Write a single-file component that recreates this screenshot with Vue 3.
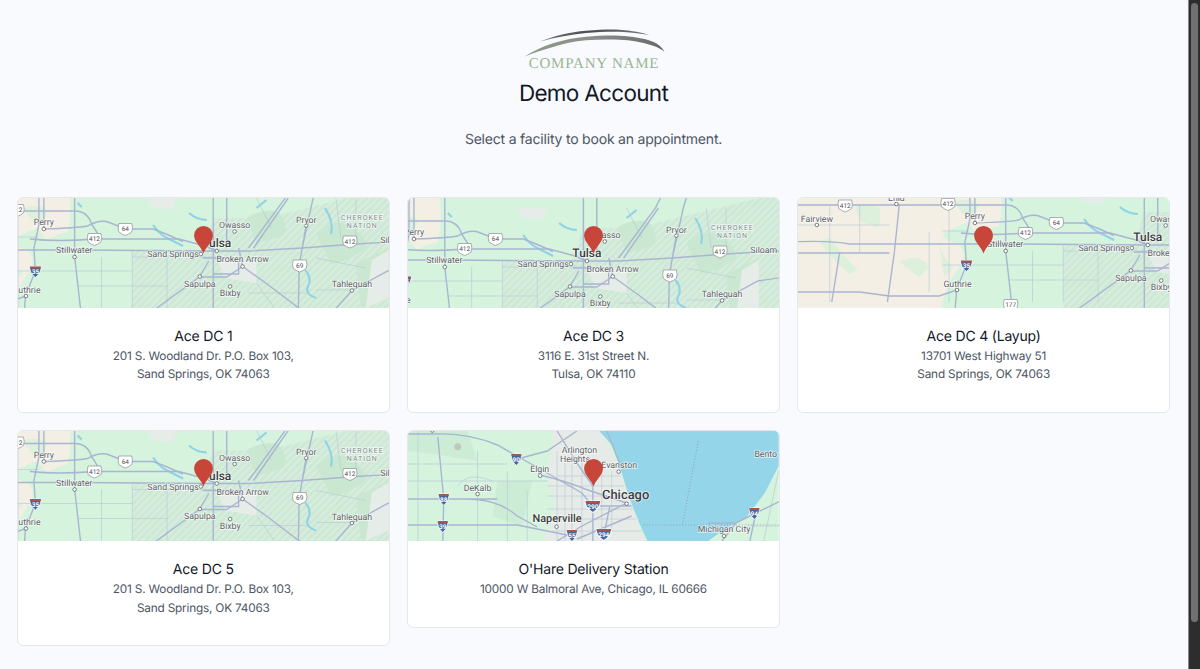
<script setup>
const tulsaLabels = [
  { x: -133, y: 30, t: 'Fairview' }, { x: -53, y: 9, t: 'Enid' },
  { x: 26, y: 27, t: 'Perry' }, { x: 56.5, y: 55, t: 'Stillwater' },
  { x: 218, y: 30, t: 'Owasso' }, { x: 290, y: 24.5, t: 'Pryor' },
  { x: 156, y: 59, t: 'Sand Springs' }, { x: 226, y: 64, t: 'Broken Arrow' },
  { x: 183, y: 88.5, t: 'Sapulpa' }, { x: 213.5, y: 98, t: 'Bixby' },
  { x: 336, y: 89, t: 'Tahlequah' }, { x: 8.5, y: 94.5, t: 'Guthrie' },
  { x: 378, y: 45, t: 'Siloam' }
]
const tulsaDots = [[-133, 33], [-53, 12], [26, 31], [57, 59], [218, 33.5], [290, 27.5], [184, 56], [200, 53], [226, 68.5], [183, 78.5], [213.5, 88.5], [336, 92.5], [8, 98]]
const tulsaShields = [
  { x: 108, y: 31, t: '64' }, { x: 77, y: 41, t: '412' }, { x: 334, y: 43.5, t: '412' },
  { x: 283.5, y: 67.5, t: '69' }, { x: -1, y: 12, t: '412' }, { x: -104.5, y: 13.5, t: '412' },
  { x: 62, y: 113, t: '177' }
]
const tulsaRoads = [
  'M-160 13 H57 Q70 13 74 26 L83 40',
  'M-160 61 H-60 M-160 50 Q-120 48 -100 52 H57 L200 53 H232 L286 50 L340 46 L410 42',
  'M12 41 Q40 44 77 41 H162 L188 48 L200 53',
  'M-160 100 H-90 L-60 104 H-10 L8 98 M-110 60 L-118 110 M-50 12 L-55 60 L-62 110',
  'M26 31 Q60 30 70 28 Q80 22 89 23.5 L109 31 H136 Q150 36 166 43.5',
  'M21 -10 V27 L16 50 L17.5 73 L7.5 98 L6 120 M26 -10 V31',
  'M57 -10 V59 L60 85 L64 120',
  'M196.5 -10 V120 M210 -10 V50 M222 50 L226 68',
  'M232 50 L269 0 L274 -10 M237 50 L272 0 M286 50 L297 0 L300 -10 M290 27 L286 50 L283 67 L282 120',
  'M192 63 L182.5 79 L126 120 M183 79 H210 L226 68.5 L252 87 L289 115',
  'M336 92.5 L316 115 M336 92.5 L372 73 L420 66',
  'M186 60 H222 V76 H196'
]
const tulsaThin = [
  'M-160 33 H-60 M-120 13 V110 M-90 13 V60 M-20 40 V100 M0 13 V110',
  'M-7 73 H60 H115 M-7 39 H20 M84 59 V110 M115 53 V110 M60 88 H150',
  'M115 59 H200 M150 59 V110 M240 0 L255 30 M300 60 L350 70 M320 0 L325 40',
  'M240 85 L258 110 M340 0 V45 M232 95 H290 M300 92 H336'
]
const tulsaWater = [
  'M136 27 Q142 36 150 40 T166 48', 'M172 15 Q180 22 190 22', 'M309 10 Q318 24 315 36',
  'M289 72 Q296 80 292 88 T300 100', 'M240 10 L250 2', 'M60 5 L64 9'
]

const chicagoLabels = [
  { x: 172.5, y: 22, t: 'Arlington' }, { x: 168, y: 31, t: 'Heights' }, { x: 212.5, y: 37, t: 'Evanston' },
  { x: 132.5, y: 40.5, t: 'Elgin' }, { x: 70, y: 60, t: 'DeKalb' }, { x: 318, y: 100.5, t: 'Michigan City' },
  { x: 360, y: 26, t: 'Bento' }
]
const chicagoDots = [[24.5, -0.5], [133, 44.7], [70, 63], [212, 40.7], [220, 72.7], [149.5, 95.7], [318, 105]]
const chicagoShields = [
  { x: 109, y: 28, t: '90' }, { x: 36, y: 68, t: '88' }, { x: 35, y: 95, t: '39' }, { x: 186, y: 75, t: '290', wide: true },
  { x: 165, y: 104, t: '55' }, { x: 197, y: 103, t: '294', wide: true }, { x: 348.5, y: 82, t: '94' }
]
const chicagoRoads = [
  'M0 3 H30 Q60 2 90 14 L140 42 L175 62 L186 75 L186 110 M30 6 L36 68 L35 110',
  'M0 68 H60 Q90 68 110 85 L130 96 M36 68 H90 M0 94 H110 L165 105',
  'M133 44 Q165 52 178 58 L220 72 M186 75 H225 M150 0 L172 35 L186 55 L186 75',
  'M110 28 L140 20 L170 0 M200 0 L214 35 M220 72 L175 95 L150 110 M197 104 L203 76 M225 85 L170 108',
  'M302 92 H330 L350 82 L375 70 M350 82 L344 110 M330 92 L316 110'
]
const chicagoThin = [
  'M0 33 H100 M0 50 H140 M70 20 V110 M10 0 V110 M100 40 V110 M120 60 V110 M50 55 Q60 40 85 50',
  'M150 20 V110 M158 30 V110 M165 20 V110 M175 30 V110 M195 40 V110 M205 40 V100 M150 45 H214 M140 55 H218 M140 65 H225 M140 78 H228 M140 88 H230 M145 100 H235',
  'M358 110 L373 40 M340 95 H375'
]

const facilities = [
  { id: 1, name: 'Ace DC 1', lines: ['201 S. Woodland Dr. P.O. Box 103,', 'Sand Springs, OK 74063'], map: 'tulsa', dx: 0, dy: 0 },
  { id: 3, name: 'Ace DC 3', lines: ['3116 E. 31st Street N.', 'Tulsa, OK 74110'], map: 'tulsa', dx: -20, dy: 10 },
  { id: 4, name: 'Ace DC 4 (Layup)', lines: ['13701 West Highway 51', 'Sand Springs, OK 74063'], map: 'tulsa', dx: 152, dy: -6 },
  { id: 5, name: 'Ace DC 5', lines: ['201 S. Woodland Dr. P.O. Box 103,', 'Sand Springs, OK 74063'], map: 'tulsa', dx: 0, dy: -0.5 },
  { id: 6, name: "O'Hare Delivery Station", lines: ['10000 W Balmoral Ave, Chicago, IL 60666'], map: 'chicago', dx: 0, dy: 0 }
]

// the Tulsa map is one big drawing, each card only sees part of it
const labelsFor = (f) => tulsaLabels.filter((l) => Math.abs(l.x + f.dx - 186) < 205)
const shieldsFor = (f) => tulsaShields.filter((s) => Math.abs(s.x + f.dx - 186) < 190 && s.y + f.dy < 112)
</script>

<template>
  <div class="page">
    <main class="content">
      <header class="header">
        <svg class="logo" viewBox="0 0 143 46" width="143" height="46">
          <defs>
            <linearGradient id="upper" x1="0" x2="1" y1="0" y2="0">
              <stop offset="0" stop-color="#6f726d" />
              <stop offset="0.45" stop-color="#4d4d50" />
              <stop offset="1" stop-color="#77797a" />
            </linearGradient>
            <linearGradient id="lower" x1="0" x2="1" y1="0" y2="0">
              <stop offset="0" stop-color="#8f9a8b" />
              <stop offset="0.5" stop-color="#8b8e89" />
              <stop offset="1" stop-color="#666866" />
            </linearGradient>
          </defs>
          <path d="M17.5 15.7 C32 10 48 6 64 4.7 C78 3.5 90 3 97.5 3.7 C110 4.6 120 6.5 128 9 C118 7.4 108 6 97.5 5.7 C86 5.5 75 6 64 7 C48 8.6 32 11.6 17.5 15.7Z" fill="url(#upper)" />
          <path d="M2.5 30.7 C11 25 20 21 31 17.3 C42 13.8 53 11.6 64 10.7 C76 9.7 87 9.2 97.5 9.7 C110 10.4 122 12 131 15.7 C136 18 140 21 142.5 25.7 C139 23 135 21 131 19.7 C120 16 109 14 97.5 13.7 C86 13.4 75 13.4 64 14.3 C52 15.4 41 17.6 31 21 C21 24 11 27 2.5 30.7Z" fill="url(#lower)" />
          <text x="72" y="41.5" class="logo-text" text-anchor="middle">COMPANY NAME</text>
        </svg>
        <h1 class="title">Demo Account</h1>
        <p class="subtitle">Select a facility to book an appointment.</p>
      </header>

      <section class="grid">
        <article v-for="f in facilities" :key="f.id" class="card">
          <svg class="map" viewBox="0 0 373 110" preserveAspectRatio="none">
            <defs>
              <pattern :id="'hatch' + f.id" width="5" height="5" patternUnits="userSpaceOnUse" patternTransform="rotate(45)">
                <rect width="5" height="5" fill="#cfe8d6" />
                <rect width="2" height="5" fill="#d7eede" />
              </pattern>
            </defs>

            <g v-if="f.map === 'tulsa'" :transform="`translate(${f.dx} ${f.dy})`">
              <rect x="-170" y="-20" width="600" height="150" fill="#d5f3dd" />
              <path d="M-170 -20 H50 Q56 10 50 34 Q38 36 30 42 Q22 36 20 30 Q8 34 -7 42 Q-2 50 10 52 Q16 60 14 68 Q8 80 0 90 L-7 110 V130 H-170Z" fill="#f4efe4" />
              <path d="M-130 50 Q-115 70 -100 82 L-92 78 Q-110 60 -120 45Z M-50 70 Q-30 60 -20 75 L-30 85Z M-95 15 Q-80 10 -70 15 Q-68 30 -72 35 L-88 30Z M-10 50 Q-5 70 5 75 L-5 85Z M5 10 Q20 5 30 12 Q28 24 15 24Z" fill="#dcf0dc" />
              <path d="M115 53 H186 L196 20 L250 20 L373 -10 H430 V130 H115Z" :fill="`url(#hatch${f.id})`" />
              <path d="M230 20 Q246 10 262 14 Q272 26 268 36 Q252 44 240 44Z M300 35 Q316 22 330 26 Q350 36 350 50 Q332 64 315 66Z M340 66 L373 50 L370 100 L345 110Z" fill="#c9e7d1" />
              <path d="M356 62 L373 52 V100 L350 110Z M130 0 L160 0 L155 12 L135 10Z M200 60 L240 60 L240 85 L208 80Z" fill="#e6ece8" />
              <path v-for="(d, i) in tulsaThin" :key="'t' + i" :d="d" class="road-thin" />
              <path v-for="(d, i) in tulsaWater" :key="'w' + i" :d="d" class="water" />
              <path v-for="(d, i) in tulsaRoads" :key="'r' + i" :d="d" class="road" />
              <circle v-for="(d, i) in tulsaDots" :key="'d' + i" :cx="d[0]" :cy="d[1]" r="1.8" class="dot" />
              <g v-for="s in shieldsFor(f)" :key="s.x" :transform="`translate(${s.x} ${s.y})`">
                <path d="M-6.5 -5.5 H6.5 Q8 -1 6.5 3 Q3 5.5 0 6.5 Q-3 5.5 -6.5 3 Q-8 -1 -6.5 -5.5Z" class="shield" />
                <text y="2.4" class="shield-text" text-anchor="middle">{{ s.t }}</text>
              </g>
              <g transform="translate(17.5 73.5)">
                <path d="M-5.5 -5 H5.5 Q6.5 1 0 6 Q-6.5 1 -5.5 -5Z" fill="#45679c" stroke="#fff" stroke-width="0.8" />
                <rect x="-5.5" y="-5" width="11" height="2" fill="#a5574f" />
                <text y="2.5" class="ishield-text" text-anchor="middle">35</text>
              </g>
              <text v-for="l in labelsFor(f)" :key="l.t" :x="l.x" :y="l.y" class="label" text-anchor="middle">{{ l.t }}</text>
              <template v-if="f.dx < 100">
                <text x="346.5" y="22" class="label nation" text-anchor="middle">CHEROKEE</text>
                <text x="346.5" y="30" class="label nation" text-anchor="middle">NATION</text>
              </template>
              <text x="200" y="49" class="label city" text-anchor="middle">Tulsa</text>
            </g>

            <g v-else>
              <rect width="373" height="110" fill="#d5f3dd" />
              <path d="M0 0 H60 L70 30 L40 25 L0 20Z M90 50 L125 50 L115 95 L85 85Z" fill="#cdecd6" />
              <path d="M145 0 H195 L214 40 L222 65 L238 110 H135 Q150 85 145 60 Q135 40 145 20Z" fill="#e7ebe7" />
              <circle cx="50" cy="15.7" r="3.5" fill="#bfc8bf" />
              <path d="M192.5 0 L206 15 L214 38 L222 65 L234 95 L241 110 H302 L320 97 L339 88 L359 62 L373 35 V0Z" fill="#94d5e9" />
              <path d="M292 10 L276 95" class="dotted" />
              <path d="M237 94 H373" class="dotted" />
              <path v-for="(d, i) in chicagoThin" :key="'t' + i" :d="d" class="road-thin" />
              <path v-for="(d, i) in chicagoRoads" :key="'r' + i" :d="d" class="road" />
              <circle v-for="(d, i) in chicagoDots" :key="'d' + i" :cx="d[0]" :cy="d[1]" r="1.8" class="dot" />
              <g v-for="s in chicagoShields" :key="s.x" :transform="`translate(${s.x} ${s.y}) scale(${s.wide ? 1.45 : 1} 1)`">
                <path d="M-5 -5 H5 Q6 1 0 6.5 Q-6 1 -5 -5Z" fill="#45679c" stroke="#fff" stroke-width="0.8" />
                <rect x="-5" y="-5" width="10" height="2" fill="#a5574f" />
              </g>
              <text v-for="s in chicagoShields" :key="'n' + s.x" :x="s.x" :y="s.y + 3.2" class="ishield-text" text-anchor="middle">{{ s.t }}</text>
              <text v-for="l in chicagoLabels" :key="l.t" :x="l.x" :y="l.y" class="label" text-anchor="middle">{{ l.t }}</text>
              <text x="150" y="91" class="label city naperville" text-anchor="middle">Naperville</text>
              <text x="219" y="68" class="label metro" text-anchor="middle">Chicago</text>
            </g>

            <path d="M186.7 55.5 C184.7 49 177.2 44 177.2 37.5 A9.5 9.5 0 0 1 196.2 37.5 C196.2 44 188.7 49 186.7 55.5Z" fill="#c8453a" />
          </svg>
          <div class="card-body">
            <h2 class="name">{{ f.name }}</h2>
            <p v-for="line in f.lines" :key="line" class="address">{{ line }}</p>
          </div>
        </article>
      </section>
    </main>
    <aside class="scrollbar"><div class="thumb"></div></aside>
  </div>
</template>

<style scoped>
.page {
  display: flex;
  height: 669px;
  overflow: hidden;
  background: #f9fafd;
  font-family: Inter, "Liberation Sans", sans-serif;
  text-rendering: geometricPrecision;
}

.content {
  flex: 1;
  min-width: 0;
  padding: 26px 18px 0 17px;
}

.header {
  display: flex;
  flex-direction: column;
  align-items: center;
}

.logo {
  display: block;
}

.logo-text {
  font-family: "Liberation Serif", serif;
  font-size: 15px;
  letter-spacing: 0.8px;
  fill: #98b593;
}

.title {
  margin: 7px 0 0;
  font-size: 22.5px;
  line-height: 30px;
  letter-spacing: -0.7px;
  font-weight: 400;
  color: #111827;
}

.subtitle {
  margin: 21px 0 0;
  font-size: 14px;
  line-height: 20px;
  letter-spacing: -0.2px;
  color: #4b5563;
}

.grid {
  display: grid;
  grid-template-columns: repeat(3, 1fr);
  align-items: start;
  gap: 17.5px;
  margin-top: 46.5px;
}

.card {
  background: #fff;
  border: 1px solid #e5e7eb;
  border-radius: 6px;
  overflow: hidden;
}

.map {
  display: block;
  width: 100%;
  height: 110px;
}

.card-body {
  padding: 20px 12px 28px;
  text-align: center;
}

.name {
  margin: 0 0 1px;
  font-size: 14px;
  line-height: 18px;
  letter-spacing: -0.2px;
  font-weight: 400;
  color: #111827;
}

.address {
  margin: 0;
  font-size: 11.8px;
  line-height: 18.5px;
  letter-spacing: -0.2px;
  color: #4b5563;
}

.road {
  fill: none;
  stroke: #a9b5d1;
  stroke-width: 1.4;
}

.road-thin {
  fill: none;
  stroke: #bccbd8;
  stroke-width: 0.7;
}

.water {
  fill: none;
  stroke: #8fd3e6;
  stroke-width: 2.2;
}

.dotted {
  fill: none;
  stroke: #8d8fa8;
  stroke-width: 0.8;
  stroke-dasharray: 1 2;
}

.dot {
  fill: #fff;
  stroke: #5f6368;
  stroke-width: 0.8;
}

.shield {
  fill: #fff;
  stroke: #8a8f94;
  stroke-width: 0.7;
}

.shield-text {
  font-family: Roboto, sans-serif;
  font-size: 6.5px;
  fill: #4a4e52;
}

.ishield-text {
  font-family: Roboto, sans-serif;
  font-size: 6.5px;
  font-weight: 700;
  fill: #fff;
}

.label {
  font-family: Roboto, sans-serif;
  font-size: 8.8px;
  fill: #5b5f64;
  stroke: rgba(255, 255, 255, 0.75);
  stroke-width: 1.5px;
  paint-order: stroke;
}

.nation {
  font-size: 7px;
  letter-spacing: 1px;
  fill: #7b8a8c;
}

.city {
  font-size: 12px;
  font-weight: 500;
  fill: #3a3d40;
}

.naperville {
  font-size: 11px;
}

.metro {
  font-size: 13px;
  font-weight: 500;
  fill: #3a3d40;
}

.scrollbar {
  width: 12px;
  flex-shrink: 0;
  padding: 3px 2px 0;
  background: #2d2d2d;
  border-left: 1px solid #8a8a8a;
  box-sizing: border-box;
}

.thumb {
  height: 619px;
  border-radius: 4px;
  background: #707070;
}
</style>
